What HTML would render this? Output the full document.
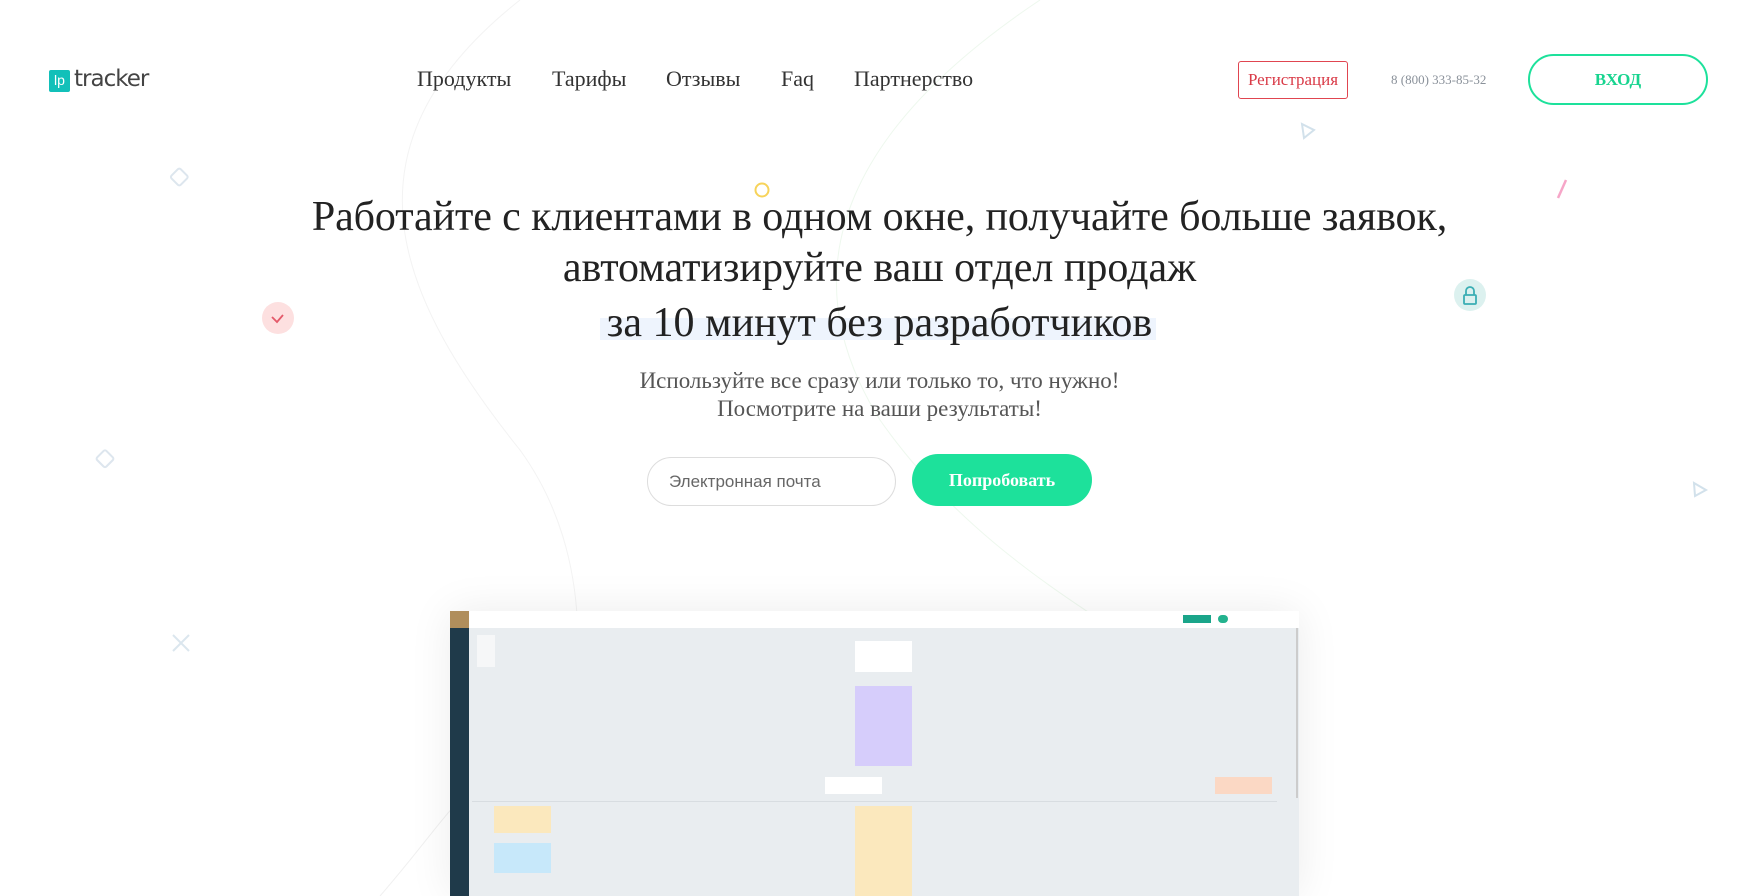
<!DOCTYPE html>
<html><head><meta charset="utf-8"><style>
*{margin:0;padding:0;box-sizing:border-box}
html,body{width:1759px;height:896px;overflow:hidden}
body{background:#fff;font-family:"Liberation Serif",serif;position:relative;color:#333}
.a{position:absolute}
.nav{top:66px;font-size:22px;color:#333}
.h{position:absolute;left:0;width:1759px;text-align:center;font-size:42px;color:#222;line-height:50px}
.sub{top:367px;left:0;width:1759px;text-align:center;font-size:23px;color:#555;line-height:28px}
</style></head><body>
<svg class="a" style="left:0;top:0" width="1759" height="896">
<path d="M520 0 C 330 150 400 300 520 450 C 600 560 580 700 560 760" stroke="#f3f3f3" fill="none"/>
<path d="M1040 0 C 860 120 780 260 880 420 C 950 520 1040 580 1100 620" stroke="#eef8ee" fill="none"/>
<path d="M380 896 C 420 850 440 820 460 800" stroke="#f0f0f0" fill="none"/>
<rect x="600" y="318" width="556" height="22" fill="#eef4fd"/>
<circle cx="762" cy="190" r="6.5" stroke="#f7d35a" stroke-width="2" fill="none"/>
<circle cx="278" cy="318" r="16" fill="#fde0e0"/>
<path d="M272 317 l5 5 l6-7" stroke="#e45a6a" stroke-width="1.8" fill="none"/>
<circle cx="1470" cy="295" r="16" fill="#dcf1ef"/>
<rect x="1464" y="295" width="12" height="9" rx="1" stroke="#3aaeb4" stroke-width="1.8" fill="none"/>
<path d="M1466 295 v-4 a4 4 0 0 1 8 0 v4" stroke="#3aaeb4" stroke-width="1.8" fill="none"/>
<rect x="173" y="171" width="13" height="13" transform="rotate(45 180 177)" stroke="#dde6ee" stroke-width="2" fill="none" rx="2"/>
<rect x="99" y="452" width="13" height="13" transform="rotate(45 105 458)" stroke="#dde6ee" stroke-width="2" fill="none" rx="2"/>
<path d="M173 635 l16 16 M189 635 l-16 16" stroke="#dbe6ee" stroke-width="2"/>
<path d="M1302 124 l12 6 l-10 8z" stroke="#d2e1eb" stroke-width="2" fill="none"/>
<path d="M1694 483 l12 7 l-11 6z" stroke="#d2e1eb" stroke-width="2" fill="none"/>
<path d="M1558 198 l8 -18" stroke="#f6a6c8" stroke-width="2.5"/>
</svg>
<div class="a" style="left:49px;top:70px;width:21px;height:22px;background:#12c0b9;border-radius:2px;color:#fff;font-family:'Liberation Sans',sans-serif;font-size:14px;line-height:20px;text-align:center">lp</div>
<div class="a" style="left:74px;top:66px;font-family:'DejaVu Sans',sans-serif;font-size:23px;color:#444;letter-spacing:-1px">tracker</div>
<div class="a nav" style="left:417px">Продукты</div>
<div class="a nav" style="left:552px">Тарифы</div>
<div class="a nav" style="left:666px">Отзывы</div>
<div class="a nav" style="left:781px">Faq</div>
<div class="a nav" style="left:854px">Партнерство</div>
<div class="a" style="left:1238px;top:61px;width:110px;height:38px;border:1px solid #e04550;border-radius:3px;color:#d93a47;font-size:17px;line-height:36px;text-align:center">Регистрация</div>
<div class="a" style="left:1391px;top:72px;font-size:13px;color:#8a919a">8 (800) 333-85-32</div>
<div class="a" style="left:1528px;top:54px;width:180px;height:51px;border:2px solid #1de19b;border-radius:26px;color:#17d48f;font-size:17px;font-weight:bold;line-height:47px;text-align:center">ВХОД</div>
<div class="h" style="top:192px;letter-spacing:-0.1px">Работайте с клиентами в одном окне, получайте больше заявок,</div>
<div class="h" style="top:243px">автоматизируйте ваш отдел продаж</div>
<div class="h" style="top:298px">за 10 минут без разработчиков</div>
<div class="a sub">Используйте все сразу или только то, что нужно!<br>Посмотрите на ваши результаты!</div>
<div class="a" style="left:647px;top:457px;width:249px;height:49px;border:1px solid #ddd;border-radius:25px;font-family:'Liberation Sans',sans-serif;font-size:17px;color:#666;line-height:47px;padding-left:21px">Электронная почта</div>
<div class="a" style="left:912px;top:454px;width:180px;height:52px;background:#1de19b;border-radius:26px;color:#fff;font-size:18px;font-weight:bold;line-height:52px;text-align:center">Попробовать</div>
<div class="a" style="left:450px;top:611px;width:849px;height:285px;background:#e9edf0;box-shadow:0 0 40px rgba(0,0,0,.08)">
 <div class="a" style="left:0;top:0;width:849px;height:17px;background:#fff"></div>
 <div class="a" style="left:0;top:0;width:19px;height:20px;background:#b08e5c"></div>
 <div class="a" style="left:0;top:17px;width:19px;height:270px;background:#1f3a4a"></div>
 <div class="a" style="left:733px;top:4px;width:28px;height:8px;background:#1aa58a"></div>
 <div class="a" style="left:768px;top:4px;width:10px;height:8px;border-radius:4px;background:#23b28e"></div>
 <div class="a" style="left:27px;top:24px;width:18px;height:32px;background:#f6f7f8"></div>
 <div class="a" style="left:405px;top:30px;width:57px;height:31px;background:#fff"></div>
 <div class="a" style="left:405px;top:75px;width:57px;height:80px;background:#d6cdfb"></div>
 <div class="a" style="left:375px;top:166px;width:57px;height:17px;background:#fff"></div>
 <div class="a" style="left:765px;top:166px;width:57px;height:17px;background:#fbd8c4"></div>
 <div class="a" style="left:22px;top:190px;width:805px;height:1px;background:#d8dde1"></div>
 <div class="a" style="left:44px;top:195px;width:57px;height:27px;background:#fbe8bd"></div>
 <div class="a" style="left:44px;top:232px;width:57px;height:30px;background:#c7e8fa"></div>
 <div class="a" style="left:405px;top:195px;width:57px;height:100px;background:#fbe8bd"></div>
 <div class="a" style="left:846px;top:17px;width:2px;height:170px;background:#ccc"></div>
</div>
</body></html>
